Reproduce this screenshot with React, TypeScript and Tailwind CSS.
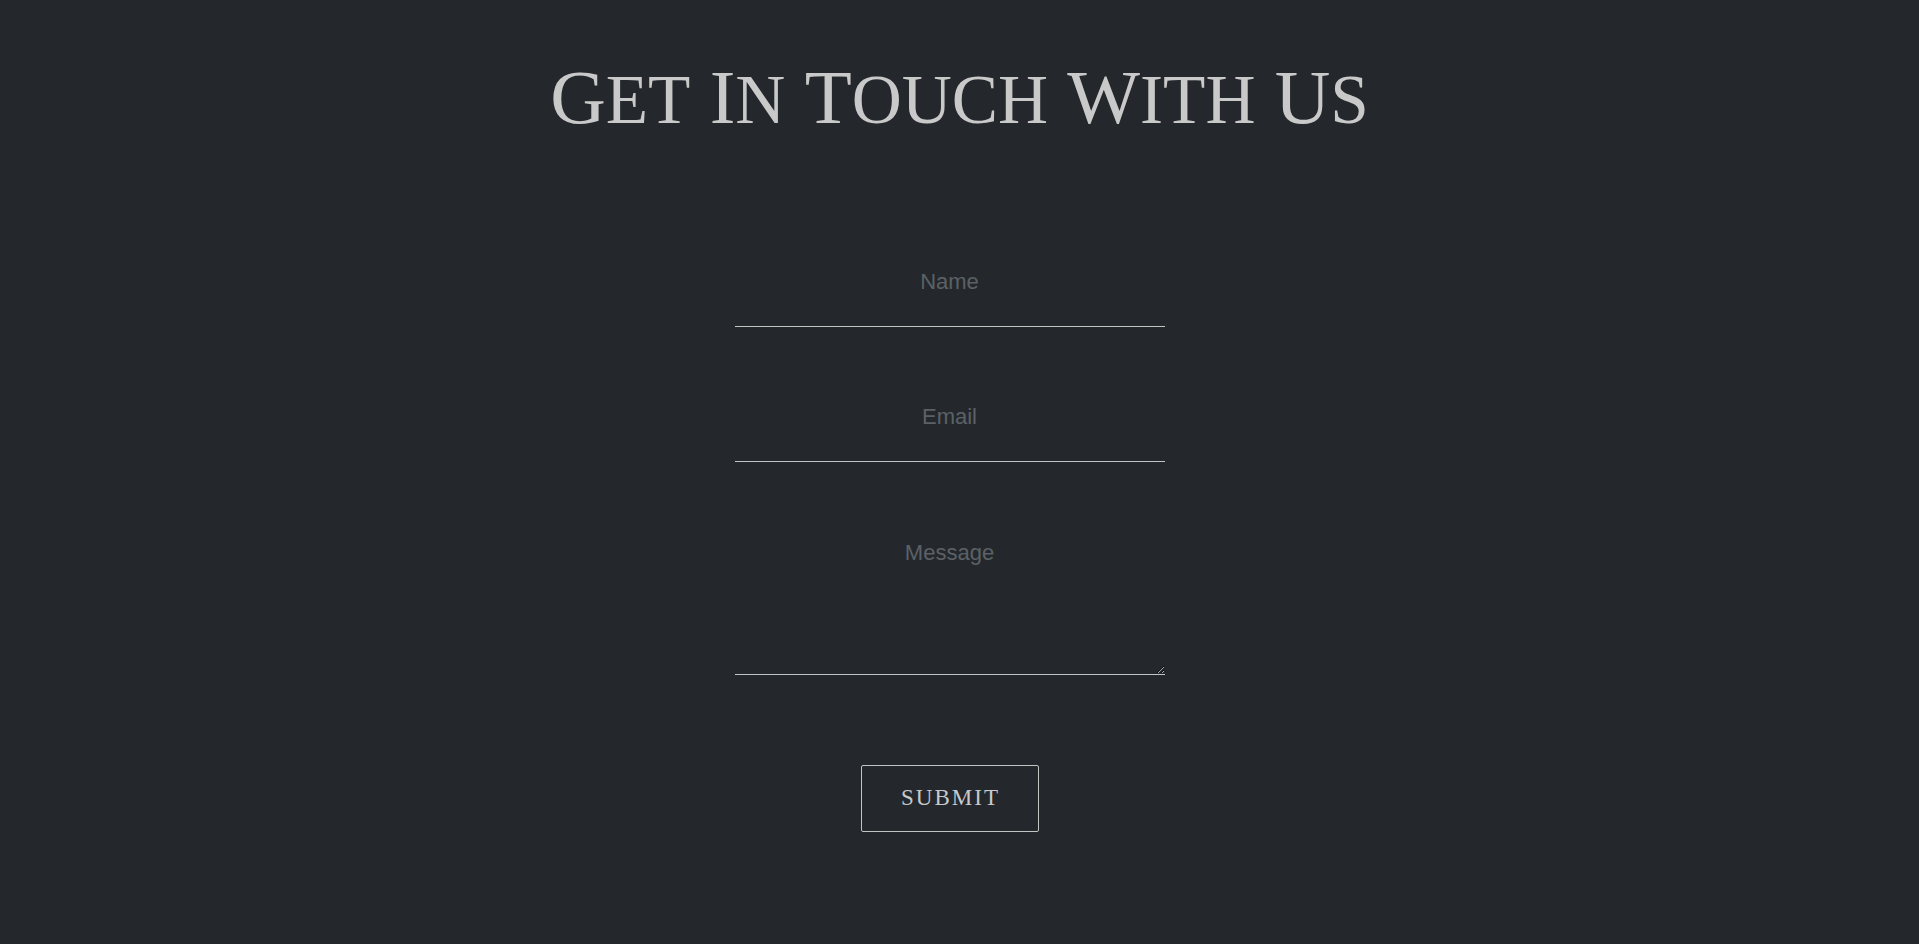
import { useState } from "react";

// Trajan-style title: first letter full size, the rest as large small caps
function TitleWord({ word }: { word: string }) {
  return (
    <span>
      {word[0]}
      <span className="text-[0.9em]">{word.slice(1).toUpperCase()}</span>
    </span>
  );
}

export default function App() {
  const [form, setForm] = useState({ name: "", email: "", message: "" });

  const fieldClass =
    "w-full bg-transparent border-0 border-b border-[#c4c4c4] text-center text-[22px] font-['Liberation_Sans',Arial,sans-serif] text-[#cfcfcf] placeholder:text-[#5b6166] outline-none";

  return (
    <div className="min-h-screen bg-[#24282c] text-[#c9c9c9]">
      <h1 className="pt-[56px] flex justify-center gap-[0.25em] text-[77px] leading-[82px] font-['Liberation_Serif','DejaVu_Serif',serif]">
        {"Get In Touch With Us".split(" ").map((w) => (
          <TitleWord key={w} word={w} />
        ))}
      </h1>

      <form
        className="flex flex-col items-center pr-[20px] pt-[97px]"
        onSubmit={(e) => e.preventDefault()}
      >
        <div className="w-[430px] flex flex-col gap-[46px]">
          <input
            className={`${fieldClass} h-[89px]`}
            placeholder="Name"
            value={form.name}
            onChange={(e) => setForm({ ...form, name: e.target.value })}
          />
          <input
            className={`${fieldClass} h-[89px] bg-[#25292d]`}
            placeholder="Email"
            value={form.email}
            onChange={(e) => setForm({ ...form, email: e.target.value })}
          />
          <textarea
            className={`${fieldClass} h-[167px] pt-[28px]`}
            placeholder="Message"
            value={form.message}
            onChange={(e) => setForm({ ...form, message: e.target.value })}
          />
        </div>

        <button
          type="submit"
          className="mt-[90px] w-[178px] h-[67px] border border-[#c4c4c4] rounded-[2px] pl-[2px] text-[23px] tracking-[2px] text-[#c9c9c9] font-['Liberation_Serif','DejaVu_Serif',serif]"
        >
          SUBMIT
        </button>
      </form>
    </div>
  );
}
